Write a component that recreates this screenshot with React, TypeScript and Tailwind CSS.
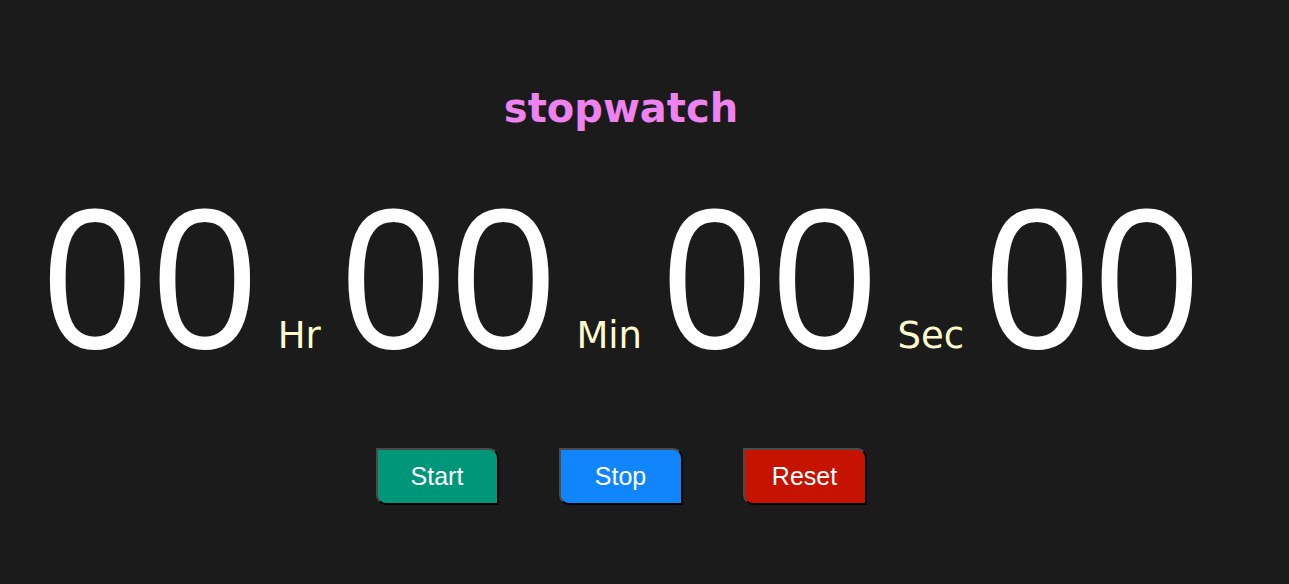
import React from 'react';

const units = ['Hr', 'Min', 'Sec'];

function Digits() {
  return (
    <span className="font-['Open_Sans',sans-serif] text-[192px] leading-none text-white">
      00
    </span>
  );
}

export default function App() {
  return (
    <div className="min-h-[584px] w-full bg-[#1b1b1b] pr-[47px]">
      <div className="flex flex-col items-center">
        <h1 className="mt-[82px] font-['DejaVu_Sans',Verdana,sans-serif] text-[40px] font-bold leading-[52px] text-[#ee82ee]">
          stopwatch
        </h1>
        <div className="mt-[44px] flex items-baseline gap-[18px]">
          <Digits />
          {units.map((u) => (
            <React.Fragment key={u}>
              <span className="font-['DejaVu_Sans',Verdana,sans-serif] text-[37px] leading-none text-[#fffacd]">
                {u}
              </span>
              <Digits />
            </React.Fragment>
          ))}
        </div>
        <div className="mt-[78px] flex gap-[60px] font-['Liberation_Sans',Arial,sans-serif] text-[25px] text-white">
          <button className="h-[57px] w-[123px] rounded-tr-[10px] rounded-bl-[10px] border-2 border-t-[#4a4a4a] border-l-[#4a4a4a] border-r-black border-b-black bg-[#00967a]">
            Start
          </button>
          <button className="h-[57px] w-[124px] rounded-tr-[10px] rounded-bl-[10px] border-2 border-t-[#4a4a4a] border-l-[#4a4a4a] border-r-black border-b-black bg-[#1185fc]">
            Stop
          </button>
          <button className="h-[57px] w-[124px] rounded-tr-[10px] rounded-bl-[10px] border-2 border-t-[#4a4a4a] border-l-[#4a4a4a] border-r-black border-b-black bg-[#c51300]">
            Reset
          </button>
        </div>
      </div>
    </div>
  );
}
